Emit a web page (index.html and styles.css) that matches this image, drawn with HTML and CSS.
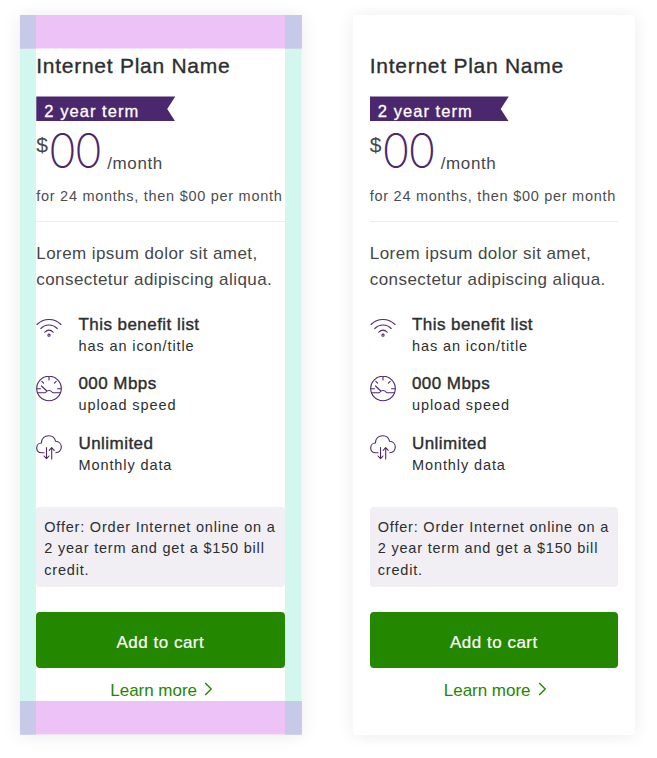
FILE: index.html
```html
<!DOCTYPE html>
<html lang="en">
<head>
<meta charset="utf-8">
<title>Internet plans</title>
<link rel="stylesheet" href="styles.css">
</head>
<body>
<svg class="defs" aria-hidden="true">
  <symbol id="wifi" viewBox="0 -1.5 26 26"><path d="M1 7C7.500.4 18.500.4 25 7M4.800 11C9.500 6.300 16.500 6.300 21.200 11M8.800 14.600C11.300 12.300 14.700 12.300 17.200 14.600"/><circle cx="13" cy="17.700" r="1.100"/></symbol>
  <symbol id="gauge" viewBox="0 .5 26 26"><circle cx="13" cy="13" r="12.300"/><path d="M13 .7V4.500M5.800 5.800L7.600 7.600M20.200 5.800L18.400 7.600M1 13.200H4.500M21.500 13.200H25M1.500 17.300H9C10.200 17.300 10 15 13 15S15.800 17.300 17 17.300H24.500M5.500 10.500L10.800 15.500"/></symbol>
  <symbol id="cloud" viewBox="0 .5 26 26"><path d="M8 18.300H6C2.800 18.300.7 16.200.7 13.400C.7 10.600 2.800 8.500 5.400 8.500C5.600 4.200 8.500 1.200 12.700 1.200C16.300 1.200 18.900 3.400 19.600 6.800C23 7 25.300 9.500 25.300 12.600C25.300 15.800 23 18.300 19.800 18.300M10.500 13V24M8 21.500L10.500 24.200L13 21.500M15.700 24.500V13.200M13.200 15.800L15.700 13L18.200 15.800"/></symbol>
</svg>
<main class="plans">
  <article class="card card--guides">
    <h2 class="title">Internet Plan Name</h2>
    <div class="term">2 year term</div>
    <div class="price"><span class="currency">$</span><span class="amount">00</span><span class="period">/month</span></div>
    <p class="note">for 24 months, then $00 per month</p>
    <p class="description">Lorem ipsum dolor sit amet,<br>consectetur adipiscing aliqua.</p>
    <ul class="benefits">
      <li><svg class="icon"><use href="#wifi"/></svg><div><strong>This benefit list</strong><span>has an icon/title</span></div></li>
      <li><svg class="icon"><use href="#gauge"/></svg><div><strong>000 Mbps</strong><span>upload speed</span></div></li>
      <li><svg class="icon"><use href="#cloud"/></svg><div><strong>Unlimited</strong><span>Monthly data</span></div></li>
    </ul>
    <p class="offer">Offer: Order Internet online on a<br>2 year term and get a $150 bill<br>credit.</p>
    <button class="cart">Add to cart</button>
    <a class="more">Learn more<svg class="chevron" viewBox="0 0 9 14"><path d="M1.200 1L7.200 7L1.200 13"/></svg></a>
  </article>
  <article class="card">
    <h2 class="title">Internet Plan Name</h2>
    <div class="term">2 year term</div>
    <div class="price"><span class="currency">$</span><span class="amount">00</span><span class="period">/month</span></div>
    <p class="note">for 24 months, then $00 per month</p>
    <p class="description">Lorem ipsum dolor sit amet,<br>consectetur adipiscing aliqua.</p>
    <ul class="benefits">
      <li><svg class="icon"><use href="#wifi"/></svg><div><strong>This benefit list</strong><span>has an icon/title</span></div></li>
      <li><svg class="icon"><use href="#gauge"/></svg><div><strong>000 Mbps</strong><span>upload speed</span></div></li>
      <li><svg class="icon"><use href="#cloud"/></svg><div><strong>Unlimited</strong><span>Monthly data</span></div></li>
    </ul>
    <p class="offer">Offer: Order Internet online on a<br>2 year term and get a $150 bill<br>credit.</p>
    <button class="cart">Add to cart</button>
    <a class="more">Learn more<svg class="chevron" viewBox="0 0 9 14"><path d="M1.200 1L7.200 7L1.200 13"/></svg></a>
  </article>
</main>
</body>
</html>
```
FILE: styles.css
```css
* { box-sizing: border-box; margin: 0; padding: 0; }
body { background: #fff; color: #2c2e30; font-family: "Liberation Sans", Arial, sans-serif; white-space: nowrap; }
.defs { display: none; }
.plans { display: flex; align-items: flex-start; gap: 51.500px; min-height: 758px; padding: 14.700px 0 0 19.700px; }
.card { flex: none; width: 282px; height: 720.300px; padding: 33.800px 17.200px 0 16.600px; border-radius: 4px; background: #fff; box-shadow: 0 1px 18px rgba(0,0,0,.08); }
/* Layout guides: side gutters and top/bottom insets */
.card--guides {
  border-radius: 0;
  background:
    linear-gradient(#c6c9e8, #c6c9e8) left top / 16.300px 33.500px no-repeat,
    linear-gradient(#c6c9e8, #c6c9e8) right top / 16.700px 33.500px no-repeat,
    linear-gradient(#c6c9e8, #c6c9e8) left bottom / 16.300px 33.500px no-repeat,
    linear-gradient(#c6c9e8, #c6c9e8) right bottom / 16.700px 33.500px no-repeat,
    linear-gradient(#edc2f7, #edc2f7) top / 100% 33.500px no-repeat,
    linear-gradient(#edc2f7, #edc2f7) bottom / 100% 33.500px no-repeat,
    linear-gradient(#d1f7ef, #d1f7ef) left / 16.300px 100% no-repeat,
    linear-gradient(#d1f7ef, #d1f7ef) right / 16.700px 100% no-repeat,
    #fff;
}
.title { height: 34px; font-size: 21px; font-weight: 400; line-height: 36px; letter-spacing: .73px; -webkit-text-stroke: .35px; }
.term { width: 139px; height: 25px; margin-top: 14px; padding-left: 8px; background: #4b286d; color: #fff; font-size: 16.500px; line-height: 31px; letter-spacing: 1.050px; -webkit-text-stroke: .3px; clip-path: polygon(0 0, 100% 0, 94.200% 50%, 100% 100%, 0 100%); }
.price { display: flex; align-items: flex-start; height: 63.500px; color: #45474a; }
.currency { width: 12px; padding-top: 10px; font-size: 21px; line-height: 28px; }
.amount { width: 59px; padding-top: 4.800px; color: #4b286d; font-family: Inter, sans-serif; font-weight: 200; font-size: 47px; line-height: 50px; letter-spacing: -2.500px; }
.period { padding-top: 31.500px; font-size: 17px; line-height: 22px; letter-spacing: .6px; }
.note { height: 37.500px; border-bottom: 1.500px solid #ececec; color: #4b4d50; font-size: 14.500px; line-height: 22px; letter-spacing: .72px; }
.description { margin-top: 18.500px; color: #45474a; font-size: 17px; line-height: 26px; letter-spacing: .43px; }
.benefits { margin-top: 21px; list-style: none; }
.benefits li { display: grid; grid-template-columns: 42.200px 1fr; height: 59.300px; }
.icon { width: 26px; height: 26px; margin: 2.500px 0 0 0; fill: none; stroke: #4b286d; stroke-width: 1.100; stroke-linecap: round; stroke-linejoin: round; }
.benefits strong { display: block; font-weight: 400; font-size: 17px; line-height: 22px; letter-spacing: .45px; -webkit-text-stroke: .4px; }
.benefits span { display: block; font-size: 14.500px; line-height: 21px; letter-spacing: .9px; }
.offer { height: 79.500px; margin-top: 15.300px; padding: 9.700px 8px; border-radius: 4px; background: #f1eff4; font-size: 14.500px; line-height: 21.600px; letter-spacing: .79px; }
.cart { display: block; width: 100%; height: 55.800px; margin-top: 25.700px; padding-top: 5px; border: 0; border-radius: 4px; background: #248700; color: #fff; font: 17px "Liberation Sans", Arial, sans-serif; letter-spacing: .5px; -webkit-text-stroke: .2px; }
.more { display: flex; justify-content: center; align-items: flex-start; margin-top: 11.500px; padding-left: 2.500px; color: #248700; font-size: 17px; line-height: 22px; letter-spacing: -.02px; }
.chevron { width: 9px; height: 14px; margin: 2.500px 0 0 7px; fill: none; stroke: currentColor; stroke-width: 1.400; }
```
